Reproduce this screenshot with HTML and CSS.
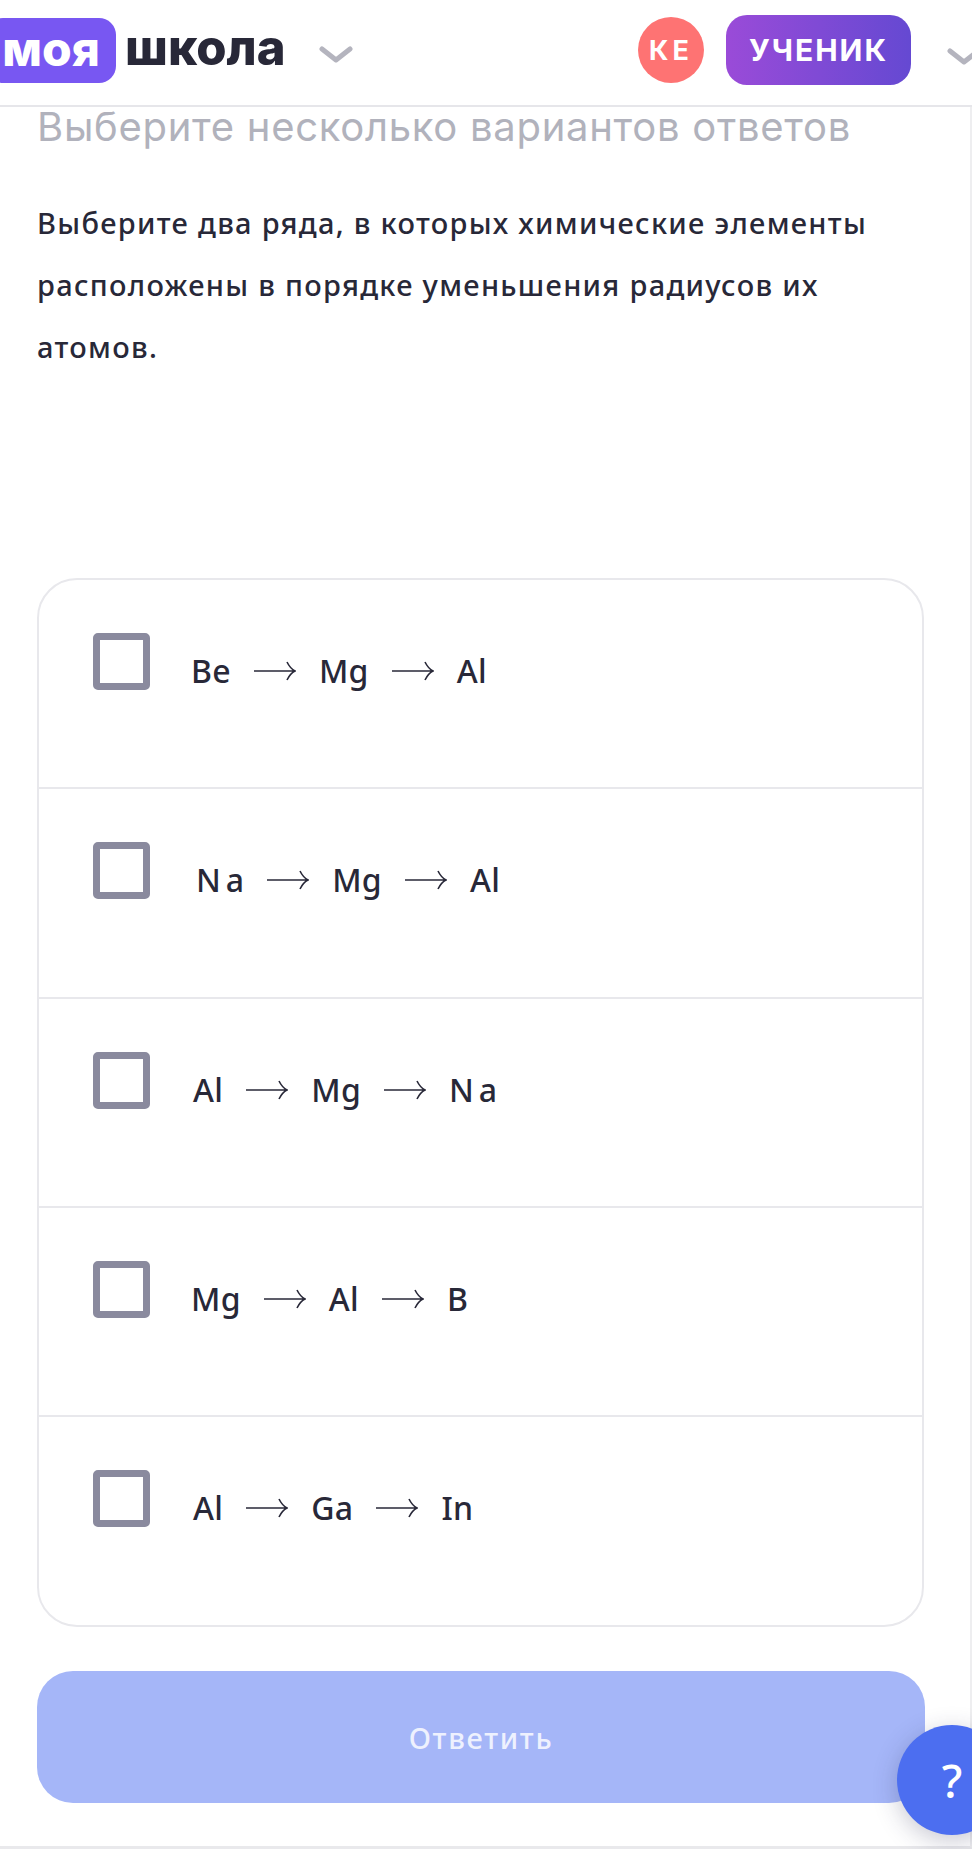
FILE: index.html
```html
<!DOCTYPE html>
<html lang="ru">
<head>
    <meta charset="UTF-8">
    <meta name="viewport" content="width=device-width, initial-scale=1.0">
    <title>Выберите несколько вариантов ответов</title>
    <link rel="stylesheet" href="styles.css">
</head>
<body>
    <header class="topbar">
        <div class="logo">
            <span class="logo-badge">моя</span>
            <span class="logo-text">школа</span>
        </div>
        <svg class="chevron chevron-logo" viewBox="0 0 34 18"><path d="M3 3 L17 14 L31 3"/></svg>
        <div class="user">
            <span class="avatar">КЕ</span>
            <span class="role">УЧЕНИК</span>
            <svg class="chevron chevron-user" viewBox="0 0 34 18"><path d="M3 3 L17 14 L31 3"/></svg>
        </div>
    </header>

    <main class="content">
        <h1 class="task-type">Выберите несколько вариантов ответов</h1>
        <p class="question">Выберите два ряда, в которых химические элементы расположены в порядке уменьшения радиусов их атомов.</p>

        <div class="answers">
            <label class="answer">
                <span class="checkbox"></span>
                <span class="formula f1">
                    <span>Be</span>
                    <svg class="arrow" viewBox="0 0 42 20"><path d="M0 10 H41 M33 1 C35 5 37 8 41 10 C37 12 35 15 33 19"/></svg>
                    <span>Mg</span>
                    <svg class="arrow" viewBox="0 0 42 20"><path d="M0 10 H41 M33 1 C35 5 37 8 41 10 C37 12 35 15 33 19"/></svg>
                    <span>Al</span>
                </span>
            </label>
            <label class="answer">
                <span class="checkbox"></span>
                <span class="formula f2">
                    <span class="wide">Na</span>
                    <svg class="arrow" viewBox="0 0 42 20"><path d="M0 10 H41 M33 1 C35 5 37 8 41 10 C37 12 35 15 33 19"/></svg>
                    <span>Mg</span>
                    <svg class="arrow" viewBox="0 0 42 20"><path d="M0 10 H41 M33 1 C35 5 37 8 41 10 C37 12 35 15 33 19"/></svg>
                    <span>Al</span>
                </span>
            </label>
            <label class="answer">
                <span class="checkbox"></span>
                <span class="formula f3">
                    <span>Al</span>
                    <svg class="arrow" viewBox="0 0 42 20"><path d="M0 10 H41 M33 1 C35 5 37 8 41 10 C37 12 35 15 33 19"/></svg>
                    <span>Mg</span>
                    <svg class="arrow" viewBox="0 0 42 20"><path d="M0 10 H41 M33 1 C35 5 37 8 41 10 C37 12 35 15 33 19"/></svg>
                    <span class="wide">Na</span>
                </span>
            </label>
            <label class="answer">
                <span class="checkbox"></span>
                <span class="formula f4">
                    <span>Mg</span>
                    <svg class="arrow" viewBox="0 0 42 20"><path d="M0 10 H41 M33 1 C35 5 37 8 41 10 C37 12 35 15 33 19"/></svg>
                    <span>Al</span>
                    <svg class="arrow" viewBox="0 0 42 20"><path d="M0 10 H41 M33 1 C35 5 37 8 41 10 C37 12 35 15 33 19"/></svg>
                    <span>B</span>
                </span>
            </label>
            <label class="answer">
                <span class="checkbox"></span>
                <span class="formula f5">
                    <span>Al</span>
                    <svg class="arrow" viewBox="0 0 42 20"><path d="M0 10 H41 M33 1 C35 5 37 8 41 10 C37 12 35 15 33 19"/></svg>
                    <span>Ga</span>
                    <svg class="arrow" viewBox="0 0 42 20"><path d="M0 10 H41 M33 1 C35 5 37 8 41 10 C37 12 35 15 33 19"/></svg>
                    <span>In</span>
                </span>
            </label>
        </div>

        <button class="submit">Ответить</button>
    </main>

    <button class="help">?</button>
</body>
</html>
```

FILE: styles.css
```css
* {
    box-sizing: border-box;
}

body {
    margin: 0;
    height: 1849px;
    width: 972px;
    position: relative;
    overflow: hidden;
    background-color: #ffffff;
    font-family: 'Inter', 'Noto Sans', sans-serif;
    color: #282838;
}

.topbar {
    display: flex;
    align-items: center;
    height: 107px;
    padding-bottom: 5px;
    border-bottom: 2px solid #e6e6ea;
}

.logo {
    display: flex;
    align-items: center;
    margin-left: -14px;
}

.logo-badge {
    display: flex;
    align-items: center;
    justify-content: center;
    width: 130px;
    height: 65px;
    background-color: #7857f2;
    color: #ffffff;
    border-radius: 17px;
    font-size: 48px;
    font-weight: 800;
    padding-bottom: 4px;
}

.logo-text {
    margin-left: 9px;
    font-size: 49px;
    font-weight: 800;
    position: relative;
    top: -3px;
}

.chevron {
    width: 34px;
    height: 18px;
    fill: none;
    stroke: #b4b4be;
    stroke-width: 5;
    stroke-linecap: round;
    stroke-linejoin: round;
}

.chevron-logo {
    margin-left: 33px;
    margin-top: 10px;
}

.user {
    display: flex;
    align-items: center;
    margin-left: auto;
    margin-right: -9px;
}

.avatar {
    display: flex;
    align-items: center;
    justify-content: center;
    width: 66px;
    height: 66px;
    border-radius: 50%;
    background-color: #fe7373;
    color: #ffffff;
    font-size: 27px;
    font-weight: 700;
    letter-spacing: 4px;
}

.role {
    display: flex;
    align-items: center;
    justify-content: center;
    width: 185px;
    height: 70px;
    margin-left: 22px;
    border-radius: 21px;
    background: linear-gradient(90deg, #9a4bd8, #6549d2);
    color: #ffffff;
    font-size: 30px;
    font-weight: 700;
    letter-spacing: 2px;
}

.chevron-user {
    margin-left: 36px;
    margin-top: 14px;
}

.content {
    height: 1742px;
    padding: 0 47px 0 37px;
    border-right: 2px solid #eeeef0;
    border-bottom: 3px solid #e9e9ec;
}

.task-type {
    margin: 0;
    font-size: 40px;
    font-weight: 400;
    line-height: 40px;
    letter-spacing: 0.72px;
    color: #b1b2bc;
    white-space: nowrap;
}

.question {
    margin: 45px 0 0;
    width: 860px;
    font-family: 'Noto Sans', sans-serif;
    font-size: 29px;
    font-weight: 500;
    line-height: 62px;
    letter-spacing: 1.3px;
}

.answers {
    margin-top: 200px;
    width: 887px;
    height: 1049px;
    border: 2px solid #e8e8ec;
    border-radius: 40px;
}

.answer {
    display: flex;
    align-items: flex-start;
    height: 209.3px;
    padding: 53px 0 0 54px;
    border-bottom: 2px solid #e8e8ec;
}

.answer:last-child {
    border-bottom: none;
}

.checkbox {
    flex: none;
    width: 57px;
    height: 57px;
    border: 7px solid #8a8a9e;
    border-radius: 5px;
}

.formula {
    display: flex;
    align-items: center;
    margin-top: 15px;
    font-family: 'Noto Sans', sans-serif;
    font-size: 32px;
    font-weight: 500;
    line-height: 46px;
    letter-spacing: 0.3px;
    gap: 23px;
}

.formula.f1 { margin-left: 41px; }
.formula.f2 { margin-left: 46px; }
.formula.f3 { margin-left: 43px; }
.formula.f4 { margin-left: 41px; }
.formula.f5 { margin-left: 43px; }

.wide {
    letter-spacing: 5px;
    margin-right: -5px;
}

.arrow {
    flex: none;
    width: 42px;
    height: 20px;
    fill: none;
    stroke: #282838;
    stroke-width: 1.6;
}

.submit {
    display: block;
    width: 888px;
    height: 132px;
    margin-top: 44px;
    border: none;
    border-radius: 36px;
    background-color: #a5b6f8;
    color: #eef1fe;
    font-family: 'Noto Sans', sans-serif;
    font-size: 29px;
    font-weight: 500;
    letter-spacing: 1.7px;
}

.help {
    position: absolute;
    left: 897px;
    top: 1725px;
    width: 110px;
    height: 110px;
    padding: 0;
    border: none;
    border-radius: 50%;
    background-color: #4c6ef0;
    box-shadow: 0 6px 24px rgba(40, 40, 80, 0.25);
    color: #ffffff;
    font-family: 'Noto Sans', sans-serif;
    font-size: 46px;
    font-weight: 500;
    text-align: center;
}
```
